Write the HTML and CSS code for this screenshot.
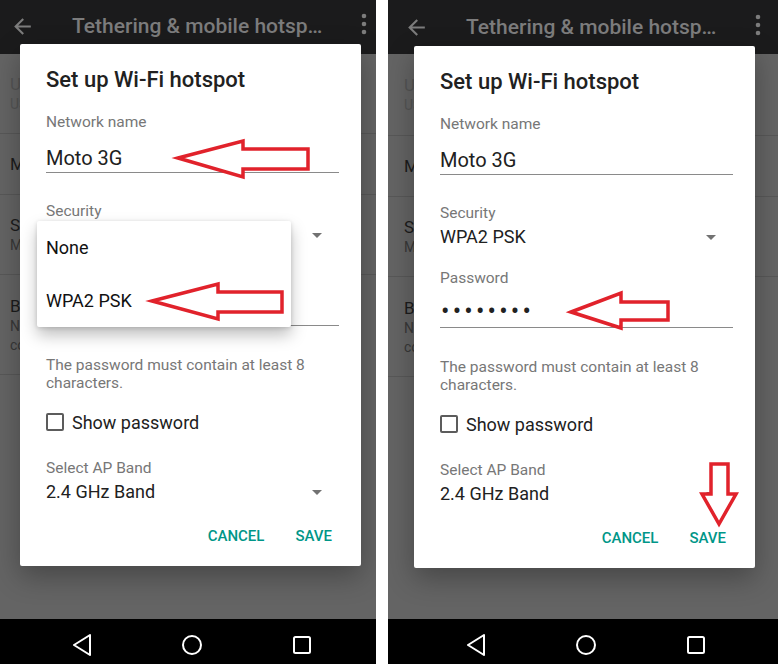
FILE: index.html
```html
<!DOCTYPE html>
<html lang="en">
<head>
    <meta charset="UTF-8">
    <meta name="viewport" content="width=device-width, initial-scale=1.0">
    <title>Set up Wi-Fi hotspot</title>
    <link rel="stylesheet" href="styles.css">
</head>
<body>
    <div class="shots">
        <!-- Step 1: choose security -->
        <div class="frame frame-left">
            <div class="screen">
                <div class="toolbar">
                    <svg class="toolbar-back" width="25" height="25" viewBox="0 0 24 24"><path d="M20 11H7.830l5.59-5.59L12 4l-8 8 8 8 1.41-1.41L7.83 13H20v-2z"/></svg>
                    <span class="toolbar-title">Tethering &amp; mobile hotsp…</span>
                    <svg class="toolbar-more" width="6" height="22" viewBox="0 0 6 22"><circle cx="3" cy="3" r="2.3"/><circle cx="3" cy="11" r="2.3"/><circle cx="3" cy="19" r="2.3"/></svg>
                </div>
                <ul class="settings">
                    <li class="setting setting-usb disabled">
                        <span class="setting-title">USB tethering</span>
                        <span class="setting-summary">USB not connected</span>
                    </li>
                    <li class="setting setting-hotspot">
                        <span class="setting-title">Mobile hotspot</span>
                    </li>
                    <li class="setting setting-setup">
                        <span class="setting-title">Set up Wi-Fi hotspot</span>
                        <span class="setting-summary">Moto 3G portable Wi-Fi hotspot</span>
                    </li>
                    <li class="setting setting-bt">
                        <span class="setting-title">Bluetooth tethering</span>
                        <span class="setting-summary">Not sharing this phone's Internet connection</span>
                    </li>
                </ul>
                <div class="navbar">
                    <svg width="22" height="22" viewBox="0 0 22 22"><polygon points="19,1 3,11 19,21"/></svg>
                    <svg width="22" height="22" viewBox="0 0 22 22"><circle cx="11" cy="11" r="9"/></svg>
                    <svg width="22" height="22" viewBox="0 0 22 22"><rect x="3" y="3" width="16" height="16" rx="1.5"/></svg>
                </div>

                <div class="dialog">
                    <h2 class="dialog-title">Set up Wi-Fi hotspot</h2>
                    <div class="field-label label-name">Network name</div>
                    <div class="field-input input-name">Moto 3G</div>
                    <div class="field-label label-security">Security</div>
                    <!-- these sit under the open dropdown -->
                    <div class="select-row"><span class="covered">WPA2 PSK</span><span class="caret"></span></div>
                    <div class="field-label label-password covered">Password</div>
                    <div class="field-input input-password"><span class="covered">••••••••</span></div>
                    <p class="helper">The password must contain at least 8 characters.</p>
                    <label class="check-row"><span class="checkbox"></span>Show password</label>
                    <div class="field-label label-band">Select AP Band</div>
                    <div class="select-row"><span>2.4 GHz Band</span><span class="caret"></span></div>
                    <div class="actions">
                        <span class="action">CANCEL</span>
                        <span class="action">SAVE</span>
                    </div>

                    <ul class="menu">
                        <li>None</li>
                        <li>WPA2 PSK</li>
                    </ul>
                </div>

                <svg class="marks" width="390" height="666" viewBox="0 0 390 666">
                    <polygon points="184,160 249,143 249,151 314,151 314,171 249,171 249,179"/>
                    <polygon points="158,303 224,286 224,294 288,294 288,314 224,314 224,321"/>
                </svg>
            </div>
        </div>

        <!-- Step 2: enter password and save -->
        <div class="frame frame-right">
            <div class="screen">
                <div class="toolbar">
                    <svg class="toolbar-back" width="25" height="25" viewBox="0 0 24 24"><path d="M20 11H7.83l5.59-5.59L12 4l-8 8 8 8 1.41-1.41L7.83 13H20v-2z"/></svg>
                    <span class="toolbar-title">Tethering &amp; mobile hotsp…</span>
                    <svg class="toolbar-more" width="6" height="22" viewBox="0 0 6 22"><circle cx="3" cy="3" r="2.3"/><circle cx="3" cy="11" r="2.3"/><circle cx="3" cy="19" r="2.3"/></svg>
                </div>
                <ul class="settings">
                    <li class="setting setting-usb disabled">
                        <span class="setting-title">USB tethering</span>
                        <span class="setting-summary">USB not connected</span>
                    </li>
                    <li class="setting setting-hotspot">
                        <span class="setting-title">Mobile hotspot</span>
                    </li>
                    <li class="setting setting-setup">
                        <span class="setting-title">Set up Wi-Fi hotspot</span>
                        <span class="setting-summary">Moto 3G portable Wi-Fi hotspot</span>
                    </li>
                    <li class="setting setting-bt">
                        <span class="setting-title">Bluetooth tethering</span>
                        <span class="setting-summary">Not sharing this phone's Internet connection</span>
                    </li>
                </ul>
                <div class="navbar">
                    <svg width="22" height="22" viewBox="0 0 22 22"><polygon points="19,1 3,11 19,21"/></svg>
                    <svg width="22" height="22" viewBox="0 0 22 22"><circle cx="11" cy="11" r="9"/></svg>
                    <svg width="22" height="22" viewBox="0 0 22 22"><rect x="3" y="3" width="16" height="16" rx="1.5"/></svg>
                </div>

                <div class="dialog">
                    <h2 class="dialog-title">Set up Wi-Fi hotspot</h2>
                    <div class="field-label label-name">Network name</div>
                    <div class="field-input input-name">Moto 3G</div>
                    <div class="field-label label-security">Security</div>
                    <div class="select-row"><span>WPA2 PSK</span><span class="caret"></span></div>
                    <div class="field-label label-password">Password</div>
                    <div class="field-input input-password">••••••••</div>
                    <p class="helper">The password must contain at least 8 characters.</p>
                    <label class="check-row"><span class="checkbox"></span>Show password</label>
                    <div class="field-label label-band">Select AP Band</div>
                    <div class="select-row"><span>2.4 GHz Band</span><span class="caret"></span></div>
                    <div class="actions">
                        <span class="action">CANCEL</span>
                        <span class="action">SAVE</span>
                    </div>
                </div>

                <svg class="marks" width="390" height="664" viewBox="0 0 390 664">
                    <polygon points="183,312 233,293 233,302 280,302 280,320 233,320 233,328"/>
                    <polygon points="323,464 340,464 340,494 348,494 331,524 314,494 323,494"/>
                </svg>
            </div>
        </div>
    </div>
</body>
</html>
```

FILE: styles.css
```css
* {
    margin: 0;
    padding: 0;
    box-sizing: border-box;
}

body {
    background: #fff;
    font-family: Roboto, "Noto Sans", sans-serif;
}

.shots {
    display: flex;
    gap: 12px;
    height: 664px;
}

.frame {
    flex: none;
    height: 664px;
    overflow: hidden;
}

.frame-left {
    width: 376px;
}

.frame-right {
    width: 390px;
}

/* one phone screen, dimmed behind the dialog */
.screen {
    position: relative;
    width: 390px;
    height: 664px;
    display: flex;
    flex-direction: column;
    background: #646464;
}

/* the left shot is cropped a little tighter */
.frame-left .screen {
    margin-left: -6px;
    margin-top: -2px;
    height: 666px;
}

.toolbar {
    flex: none;
    height: 54px;
    display: flex;
    align-items: center;
    padding-left: 16px;
    background: #1b1b1c;
    color: #7c7c7c;
}

.frame-left .toolbar {
    height: 56px;
}

.toolbar-back {
    fill: #7c7c7c;
}

.toolbar-title {
    margin-left: 37px;
    font-size: 21px;
    font-weight: 500;
    white-space: nowrap;
}

.toolbar-more {
    margin-left: auto;
    margin-right: 17px;
    margin-top: -4px;
    fill: #7c7c7c;
}

/* settings list under the scrim */
.settings {
    flex: 1;
    list-style: none;
}

.setting {
    display: flex;
    flex-direction: column;
    justify-content: center;
    padding: 0 16px;
    border-bottom: 1px solid #585858;
    white-space: nowrap;
}

.setting-usb {
    height: 82px;
}

.frame-left .setting-usb {
    height: 80px;
}

.setting-hotspot {
    height: 61px;
}

.setting-setup {
    height: 80px;
}

.setting-bt {
    height: 100px;
    white-space: normal;
    width: 300px;
}

.setting-title {
    font-size: 17px;
    line-height: 22px;
    color: #1c1c1c;
}

.setting-summary {
    font-size: 14px;
    line-height: 19px;
    color: #383838;
}

.disabled .setting-title,
.disabled .setting-summary {
    color: #545454;
}

.navbar {
    flex: none;
    height: 45px;
    display: flex;
    align-items: center;
    gap: 88px;
    padding: 7px 0 0 77px;
    background: #000;
}

.navbar svg {
    fill: none;
    stroke: #fff;
    stroke-width: 2;
    stroke-linejoin: round;
}

/* hotspot dialog */
.dialog {
    position: absolute;
    left: 26px;
    top: 46px;
    width: 341px;
    height: 522px;
    padding: 22px 22px 0 26px;
    background: #fff;
    border-radius: 2px;
    box-shadow: 0 10px 28px rgba(0, 0, 0, 0.3);
    color: #212121;
}

.dialog-title {
    font-size: 22px;
    font-weight: 500;
    line-height: 28px;
}

.field-label {
    font-size: 15.5px;
    line-height: 20px;
    color: #777;
}

.label-name {
    margin-top: 18px;
}

.label-security {
    margin-top: 28px;
}

.label-password {
    margin-top: 19px;
}

.label-band {
    margin-top: 24px;
}

.field-input {
    border-bottom: 1px solid #8a8a8a;
}

.input-name {
    margin-top: 13px;
    padding-bottom: 1px;
    font-size: 20px;
    line-height: 26px;
}

.input-password {
    margin-top: 11px;
    padding-bottom: 2px;
    padding-left: 1px;
    font-size: 25px;
    line-height: 26px;
    letter-spacing: 3.2px;
}

.covered {
    visibility: hidden;
}

.select-row {
    display: flex;
    justify-content: space-between;
    align-items: center;
    margin-top: 2px;
    font-size: 18px;
    line-height: 24px;
}

.caret {
    width: 0;
    height: 0;
    margin-right: 17px;
    border-left: 5px solid transparent;
    border-right: 5px solid transparent;
    border-top: 5px solid #727272;
}

.helper {
    margin-top: 30px;
    font-size: 15.5px;
    line-height: 18px;
    color: #777;
}

.check-row {
    display: flex;
    align-items: center;
    gap: 8px;
    height: 24px;
    margin-top: 18px;
    font-size: 18px;
}

.checkbox {
    width: 18px;
    height: 18px;
    border: 2px solid #5c5c5c;
    border-radius: 2px;
}

.actions {
    display: flex;
    justify-content: flex-end;
    gap: 31px;
    margin-top: 22px;
    padding-right: 7px;
    font-size: 15px;
    font-weight: 500;
    line-height: 20px;
    color: #009688;
}

/* open security dropdown */
.menu {
    position: absolute;
    left: 17px;
    top: 177px;
    width: 254px;
    list-style: none;
    background: #fff;
    border-radius: 2px;
    box-shadow: 0 8px 16px rgba(0, 0, 0, 0.26), 0 1px 4px rgba(0, 0, 0, 0.14);
}

.menu li {
    height: 53px;
    line-height: 53px;
    padding-left: 9px;
    font-size: 18px;
    color: #111;
}

/* red annotation arrows */
.marks {
    position: absolute;
    left: 0;
    top: 0;
    fill: #fff;
    stroke: #e1222b;
    stroke-width: 3.5;
    stroke-linejoin: miter;
}
```
